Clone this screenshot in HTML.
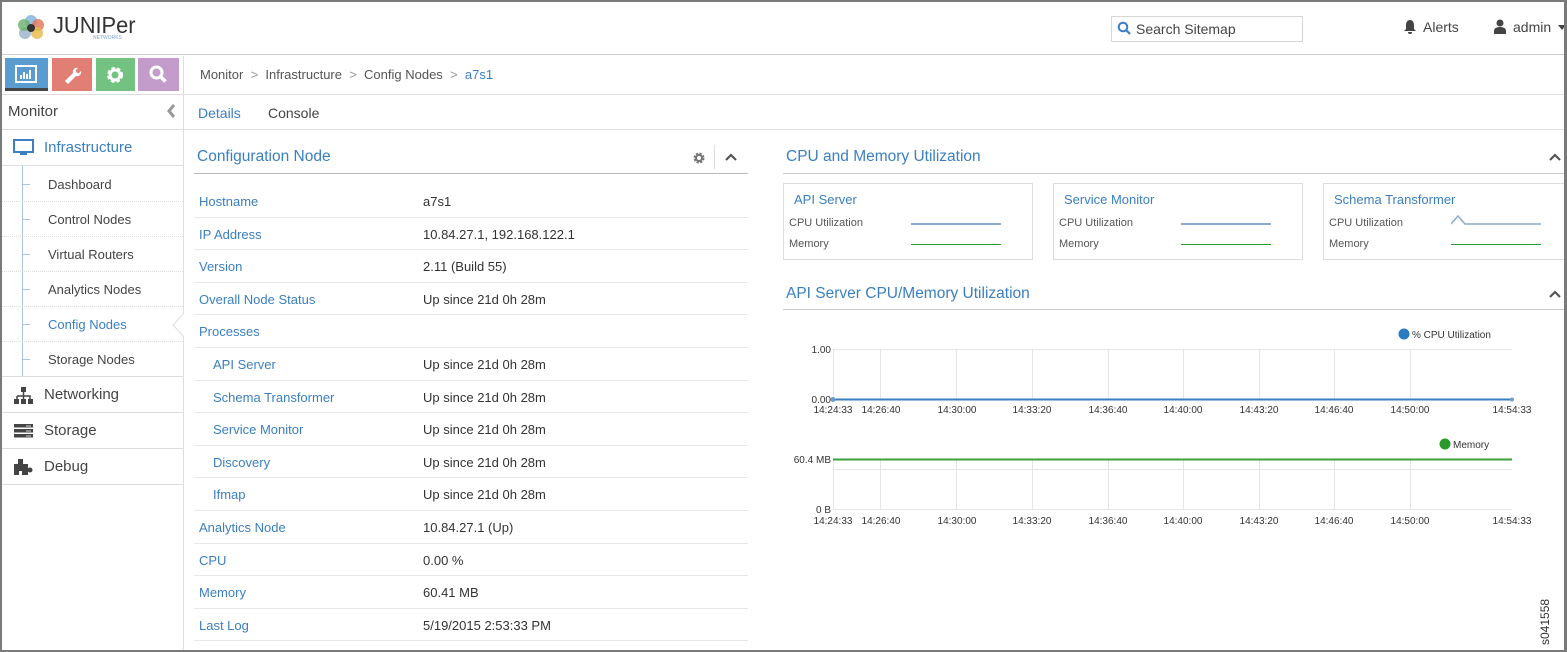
<!DOCTYPE html>
<html><head><style>
*{box-sizing:border-box;margin:0;padding:0}
body{width:1567px;height:652px;overflow:hidden;background:#fff;font-family:"Liberation Sans",sans-serif;color:#333;position:relative}
.a{position:absolute;white-space:nowrap}
.blue{color:#3a7fc1}
.frame{position:absolute;left:0;top:0;width:1567px;height:652px;border:2px solid #7a7a7a;border-right-width:3px;pointer-events:none}
.row{position:absolute;left:194px;width:554px;height:32.6px;border-bottom:1px solid #e8e8e8;font-size:13px}
.row span{position:absolute;top:9px}
.sub{position:absolute;left:48px;font-size:13px;color:#444}
.dots{position:absolute;left:2px;width:181px;border-top:1px dotted #ddd}
.small{font-size:11px;color:#555}
</style></head><body>
<!-- header -->
<div class="a" style="left:2px;top:2px;width:1562px;height:53px;border-bottom:1px solid #ccc"></div>
<svg class="a" style="left:15px;top:12px" width="32" height="32" viewBox="0 0 32 32">
<circle cx="16" cy="9" r="6" fill="#7fb0d8" opacity=".8"/><circle cx="23" cy="13" r="6" fill="#e0735a" opacity=".8"/><circle cx="22" cy="21" r="6" fill="#e6b84a" opacity=".8"/><circle cx="10" cy="21" r="6" fill="#9ab0c8" opacity=".8"/><circle cx="9" cy="13" r="6" fill="#6ab06a" opacity=".8"/><circle cx="16" cy="16" r="4" fill="#333"/></svg>
<div class="a" style="left:53px;top:12px;font-size:23px;color:#333;transform:scaleX(0.95);transform-origin:0 0">JUNIPer</div>
<div class="a" style="left:93px;top:35px;font-size:5px;color:#7fa7d0">NETWORKS</div>
<div class="a" style="left:1111px;top:16px;width:192px;height:26px;border:1px solid #d6d6d6"></div>
<svg class="a" style="left:1117px;top:21px" width="14" height="14" viewBox="0 0 14 14"><circle cx="6" cy="6" r="4.3" fill="none" stroke="#3a7fc1" stroke-width="2"/><path d="M9 9l4 4" stroke="#3a7fc1" stroke-width="2.2"/></svg>
<div class="a" style="left:1136px;top:21px;font-size:14px;color:#444">Search Sitemap</div>
<svg class="a" style="left:1403px;top:19px" width="14" height="16" viewBox="0 0 14 16"><path d="M7 1c-3 0-4 3-4 5v4l-2 2h12l-2-2V6c0-2-1-5-4-5z M5 13h4a2 2 0 0 1-4 0z" fill="#444"/></svg>
<div class="a" style="left:1423px;top:19px;font-size:14px;color:#444">Alerts</div>
<svg class="a" style="left:1493px;top:19px" width="14" height="15" viewBox="0 0 14 15"><circle cx="7" cy="4" r="3.5" fill="#444"/><path d="M1 15v-3c0-3 3-4 6-4s6 1 6 4v3z" fill="#444"/></svg>
<div class="a" style="left:1513px;top:19px;font-size:14px;color:#444">admin</div>
<div class="a" style="left:1558px;top:25px;border:4px solid transparent;border-top:5px solid #444"></div>
<!-- sidebar -->
<div class="a" style="left:183px;top:56px;width:1px;height:594px;background:#ddd"></div>
<div class="a" style="left:5px;top:58px;width:43px;height:33px;background:#5a9bd0;border-bottom:3px solid #444"></div>
<svg class="a" style="left:15px;top:65px" width="22" height="18" viewBox="0 0 22 18"><rect x="1" y="1" width="20" height="16" fill="none" stroke="#fff" stroke-width="2"/><path d="M6 14V10M9 14V7M12 14V9M15 14V5" stroke="#fff" stroke-width="2"/></svg>
<div class="a" style="left:52px;top:58px;width:40px;height:33px;background:#e27f74"></div>
<svg class="a" style="left:62px;top:64px" width="20" height="20" viewBox="0 0 20 20"><path d="M3 17l8-8a4 4 0 0 1 5-5l-2.5 2.5 1 2 2 1L19 7a4 4 0 0 1-5 5l-8 8z" fill="#fff"/></svg>
<div class="a" style="left:96px;top:58px;width:39px;height:33px;background:#74c281"></div>
<svg class="a" style="left:105px;top:65px" width="20" height="20" viewBox="0 0 20 20"><circle cx="10" cy="10" r="6" fill="none" stroke="#fff" stroke-width="4" stroke-dasharray="3 2"/><circle cx="10" cy="10" r="5" fill="none" stroke="#fff" stroke-width="3"/></svg>
<div class="a" style="left:138px;top:58px;width:41px;height:33px;background:#c39ccb"></div>
<svg class="a" style="left:148px;top:64px" width="20" height="20" viewBox="0 0 20 20"><circle cx="8.5" cy="8.5" r="5.5" fill="none" stroke="#fff" stroke-width="3"/><path d="M12.5 12.5l5 5" stroke="#fff" stroke-width="3.5"/></svg>
<div class="a" style="left:2px;top:94px;width:181px;border-top:1px solid #ddd"></div>
<div class="a" style="left:8px;top:103px;font-size:15px;color:#444">Monitor</div>
<svg class="a" style="left:166px;top:103px" width="10" height="16" viewBox="0 0 10 16"><path d="M8 2L3 8l5 6" fill="none" stroke="#999" stroke-width="3"/></svg>
<div class="a" style="left:2px;top:129px;width:181px;border-top:1px solid #ddd"></div>
<svg class="a" style="left:13px;top:139px" width="21" height="17" viewBox="0 0 21 17"><rect x="1" y="1" width="19" height="12" fill="none" stroke="#3a7fc1" stroke-width="2"/><rect x="7" y="14" width="7" height="2" fill="#3a7fc1"/></svg>
<div class="a blue" style="left:44px;top:139px;font-size:15px">Infrastructure</div>
<div class="a" style="left:2px;top:165px;width:181px;border-top:1px solid #ddd"></div>
<div class="a" style="left:22px;top:166px;width:1px;height:210px;background:#a8c6e2"></div>
<div class="sub" style="top:177px">Dashboard</div>
<div class="sub" style="top:212px">Control Nodes</div>
<div class="sub" style="top:247px">Virtual Routers</div>
<div class="sub" style="top:282px">Analytics Nodes</div>
<div class="sub" style="top:317px;color:#3a7fc1">Config Nodes</div>
<div class="sub" style="top:352px">Storage Nodes</div>
<div class="a" style="left:22px;top:184px;width:8px;border-top:1px solid #a8c6e2"></div>
<div class="a" style="left:22px;top:219px;width:8px;border-top:1px solid #a8c6e2"></div>
<div class="a" style="left:22px;top:254px;width:8px;border-top:1px solid #a8c6e2"></div>
<div class="a" style="left:22px;top:289px;width:8px;border-top:1px solid #a8c6e2"></div>
<div class="a" style="left:22px;top:324px;width:8px;border-top:1px solid #a8c6e2"></div>
<div class="a" style="left:22px;top:359px;width:8px;border-top:1px solid #a8c6e2"></div>
<div class="dots" style="top:201px"></div><div class="dots" style="top:236px"></div><div class="dots" style="top:271px"></div><div class="dots" style="top:306px"></div><div class="dots" style="top:341px"></div>
<svg class="a" style="left:172px;top:313px" width="12" height="24" viewBox="0 0 12 24"><path d="M12 0L1 12l11 12" fill="#fff" stroke="#ddd"/></svg>
<div class="a" style="left:2px;top:376px;width:181px;border-top:1px solid #ddd"></div>
<svg class="a" style="left:14px;top:387px" width="19" height="17" viewBox="0 0 19 17"><rect x="7" y="0" width="5" height="5" fill="#444"/><path d="M9.5 5v4M3 9h13v3M3 9v3M9.5 9v3" stroke="#444" stroke-width="1.5" fill="none"/><rect x="0" y="12" width="5" height="5" fill="#444"/><rect x="7" y="12" width="5" height="5" fill="#444"/><rect x="14" y="12" width="5" height="5" fill="#444"/></svg>
<div class="a" style="left:44px;top:386px;font-size:15px;color:#444">Networking</div>
<div class="a" style="left:2px;top:412px;width:181px;border-top:1px solid #ddd"></div>
<svg class="a" style="left:14px;top:424px" width="19" height="14" viewBox="0 0 19 14"><rect y="0" width="19" height="3.5" fill="#444"/><rect y="5" width="19" height="3.5" fill="#444"/><rect y="10" width="19" height="3.5" fill="#444"/><path d="M12 2h5M12 7h5M12 12h5" stroke="#fff" stroke-width=".8"/></svg>
<div class="a" style="left:44px;top:422px;font-size:15px;color:#444">Storage</div>
<div class="a" style="left:2px;top:448px;width:181px;border-top:1px solid #ddd"></div>
<svg class="a" style="left:14px;top:459px" width="19" height="16" viewBox="0 0 19 16"><rect x="4" y="0" width="5" height="5" fill="#444"/><rect x="0" y="5" width="14" height="11" fill="#444"/><circle cx="16" cy="11" r="2.5" fill="#444"/><rect x="5" y="12" width="3" height="4" fill="#fff"/></svg>
<div class="a" style="left:44px;top:458px;font-size:15px;color:#444">Debug</div>
<div class="a" style="left:2px;top:484px;width:181px;border-top:1px solid #ddd"></div>
<!-- breadcrumb -->
<div class="a" style="left:200px;top:67px;font-size:13px;color:#555">Monitor &nbsp;<span style="color:#999">&gt;</span>&nbsp; Infrastructure &nbsp;<span style="color:#999">&gt;</span>&nbsp; Config Nodes &nbsp;<span style="color:#999">&gt;</span>&nbsp; <span class="blue">a7s1</span></div>
<div class="a" style="left:184px;top:94px;width:1380px;border-top:1px solid #e2e2e2"></div>
<div class="a blue" style="left:198px;top:105px;font-size:14px">Details</div>
<div class="a" style="left:268px;top:105px;font-size:14px;color:#444">Console</div>
<div class="a" style="left:184px;top:129px;width:1380px;border-top:1px solid #e2e2e2"></div>
<!-- config node -->
<div class="a blue" style="left:197px;top:148px;font-size:15.5px">Configuration Node</div>
<svg class="a" style="left:693px;top:152px" width="12" height="12" viewBox="0 0 12 12"><circle cx="6" cy="6" r="4" fill="none" stroke="#777" stroke-width="3" stroke-dasharray="2 1.2"/><circle cx="6" cy="6" r="3" fill="none" stroke="#777" stroke-width="2"/></svg>
<div class="a" style="left:714px;top:145px;width:1px;height:24px;background:#ddd"></div>
<svg class="a" style="left:725px;top:153px" width="12" height="8" viewBox="0 0 12 8"><path d="M1 7l5-5 5 5" fill="none" stroke="#555" stroke-width="2.2"/></svg>
<div class="a" style="left:194px;top:173px;width:554px;border-top:1px solid #bbb"></div>
<div class="row" style="top:185px"><span class="blue" style="left:5px">Hostname</span><span style="left:229px">a7s1</span></div>
<div class="row" style="top:217.6px"><span class="blue" style="left:5px">IP Address</span><span style="left:229px">10.84.27.1, 192.168.122.1</span></div>
<div class="row" style="top:250.2px"><span class="blue" style="left:5px">Version</span><span style="left:229px">2.11 (Build 55)</span></div>
<div class="row" style="top:282.8px"><span class="blue" style="left:5px">Overall Node Status</span><span style="left:229px">Up since 21d 0h 28m</span></div>
<div class="row" style="top:315.4px"><span class="blue" style="left:5px">Processes</span></div>
<div class="row" style="top:348px"><span class="blue" style="left:19px">API Server</span><span style="left:229px">Up since 21d 0h 28m</span></div>
<div class="row" style="top:380.6px"><span class="blue" style="left:19px">Schema Transformer</span><span style="left:229px">Up since 21d 0h 28m</span></div>
<div class="row" style="top:413.2px"><span class="blue" style="left:19px">Service Monitor</span><span style="left:229px">Up since 21d 0h 28m</span></div>
<div class="row" style="top:445.8px"><span class="blue" style="left:19px">Discovery</span><span style="left:229px">Up since 21d 0h 28m</span></div>
<div class="row" style="top:478.4px"><span class="blue" style="left:19px">Ifmap</span><span style="left:229px">Up since 21d 0h 28m</span></div>
<div class="row" style="top:511px"><span class="blue" style="left:5px">Analytics Node</span><span style="left:229px">10.84.27.1 (Up)</span></div>
<div class="row" style="top:543.6px"><span class="blue" style="left:5px">CPU</span><span style="left:229px">0.00 %</span></div>
<div class="row" style="top:576.2px"><span class="blue" style="left:5px">Memory</span><span style="left:229px">60.41 MB</span></div>
<div class="row" style="top:608.8px"><span class="blue" style="left:5px">Last Log</span><span style="left:229px">5/19/2015 2:53:33 PM</span></div>
<!-- right -->
<div class="a blue" style="left:786px;top:148px;font-size:15.5px">CPU and Memory Utilization</div>
<svg class="a" style="left:1549px;top:153px" width="12" height="8" viewBox="0 0 12 8"><path d="M1 7l5-5 5 5" fill="none" stroke="#555" stroke-width="2.2"/></svg>
<div class="a" style="left:783px;top:173px;width:781px;border-top:1px solid #ccc"></div>
<div class="a" style="left:1053px;top:183px;width:250px;height:77px;border:1px solid #ddd"></div>
<div class="a" style="left:1323px;top:183px;width:250px;height:77px;border:1px solid #ddd"></div>
<div class="a" style="left:783px;top:183px;width:250px;height:77px;border:1px solid #ddd"></div>
<div class="a blue" style="left:794px;top:192px;font-size:13px">API Server</div>
<div class="a blue" style="left:1064px;top:192px;font-size:13px">Service Monitor</div>
<div class="a blue" style="left:1334px;top:192px;font-size:13px">Schema Transformer</div>
<div class="a small" style="left:789px;top:217px">CPU Utilization</div><div class="a small" style="left:789px;top:238px">Memory</div>
<div class="a small" style="left:1059px;top:217px">CPU Utilization</div><div class="a small" style="left:1059px;top:238px">Memory</div>
<div class="a small" style="left:1329px;top:217px">CPU Utilization</div><div class="a small" style="left:1329px;top:238px">Memory</div>
<div class="a" style="left:911px;top:223px;width:90px;height:2px;background:#8aabc9"></div>
<div class="a" style="left:911px;top:244px;width:90px;height:1px;background:#2a9a2a"></div>
<div class="a" style="left:1181px;top:223px;width:90px;height:2px;background:#8aabc9"></div>
<div class="a" style="left:1181px;top:244px;width:90px;height:1px;background:#2a9a2a"></div>
<svg class="a" style="left:1451px;top:214px" width="92" height="12"><path d="M0 10L7 2L14 10H90" fill="none" stroke="#8aabc9" stroke-width="1.5"/></svg>
<div class="a" style="left:1451px;top:244px;width:90px;height:1px;background:#2a9a2a"></div>
<div class="a blue" style="left:786px;top:285px;font-size:15.5px">API Server CPU/Memory Utilization</div>
<svg class="a" style="left:1549px;top:290px" width="12" height="8" viewBox="0 0 12 8"><path d="M1 7l5-5 5 5" fill="none" stroke="#555" stroke-width="2.2"/></svg>
<div class="a" style="left:783px;top:309px;width:781px;border-top:1px solid #ccc"></div>
<svg class="a" style="left:780px;top:320px" width="787" height="220">
<g stroke="#e6e6e6" stroke-width="1">
<line x1="53" y1="29.5" x2="732" y2="29.5"/>
<line x1="100.5" y1="29" x2="100.5" y2="79"/><line x1="176.5" y1="29" x2="176.5" y2="79"/><line x1="252.5" y1="29" x2="252.5" y2="79"/><line x1="328.5" y1="29" x2="328.5" y2="79"/><line x1="403.5" y1="29" x2="403.5" y2="79"/><line x1="479.5" y1="29" x2="479.5" y2="79"/><line x1="554.5" y1="29" x2="554.5" y2="79"/><line x1="630.5" y1="29" x2="630.5" y2="79"/>
<line x1="53" y1="149.5" x2="732" y2="149.5"/>
<line x1="100.5" y1="139" x2="100.5" y2="189"/><line x1="176.5" y1="139" x2="176.5" y2="189"/><line x1="252.5" y1="139" x2="252.5" y2="189"/><line x1="328.5" y1="139" x2="328.5" y2="189"/><line x1="403.5" y1="139" x2="403.5" y2="189"/><line x1="479.5" y1="139" x2="479.5" y2="189"/><line x1="554.5" y1="139" x2="554.5" y2="189"/><line x1="630.5" y1="139" x2="630.5" y2="189"/>
<line x1="53.5" y1="29" x2="53.5" y2="79"/><line x1="53.5" y1="139" x2="53.5" y2="189"/>
<line x1="53" y1="189.5" x2="732" y2="189.5"/>
</g>
<line x1="53" y1="79.5" x2="732" y2="79.5" stroke="#3a7fc1" stroke-width="2"/>
<circle cx="53" cy="79.5" r="2.5" fill="#6a9fd0"/><circle cx="732" cy="79.5" r="2" fill="#6a9fd0"/>
<line x1="53" y1="139.5" x2="732" y2="139.5" stroke="#3ca03c" stroke-width="2"/>
<circle cx="624" cy="14" r="5.5" fill="#2a7bc0"/><text x="632" y="18" font-size="10" font-family="Liberation Sans" fill="#333">% CPU Utilization</text>
<circle cx="665" cy="124" r="5.5" fill="#2a9a2a"/><text x="673" y="128" font-size="10" font-family="Liberation Sans" fill="#333">Memory</text>
<g font-size="10" font-family="Liberation Sans" fill="#333" text-anchor="end">
<text x="51" y="33">1.00</text><text x="51" y="83">0.00</text><text x="51" y="143">60.4 MB</text><text x="51" y="193">0 B</text></g>
<g font-size="10" font-family="Liberation Sans" fill="#333" text-anchor="middle">
<text x="53" y="93">14:24:33</text><text x="101" y="93">14:26:40</text><text x="177" y="93">14:30:00</text><text x="252" y="93">14:33:20</text><text x="328" y="93">14:36:40</text><text x="403" y="93">14:40:00</text><text x="479" y="93">14:43:20</text><text x="554" y="93">14:46:40</text><text x="630" y="93">14:50:00</text><text x="732" y="93">14:54:33</text>
<text x="53" y="204">14:24:33</text><text x="101" y="204">14:26:40</text><text x="177" y="204">14:30:00</text><text x="252" y="204">14:33:20</text><text x="328" y="204">14:36:40</text><text x="403" y="204">14:40:00</text><text x="479" y="204">14:43:20</text><text x="554" y="204">14:46:40</text><text x="630" y="204">14:50:00</text><text x="732" y="204">14:54:33</text></g>
</svg>
<div class="a" style="left:1538px;top:645px;font-size:12px;color:#333;transform:rotate(-90deg);transform-origin:0 0">s041558</div>
<div class="frame"></div>
</body></html>
